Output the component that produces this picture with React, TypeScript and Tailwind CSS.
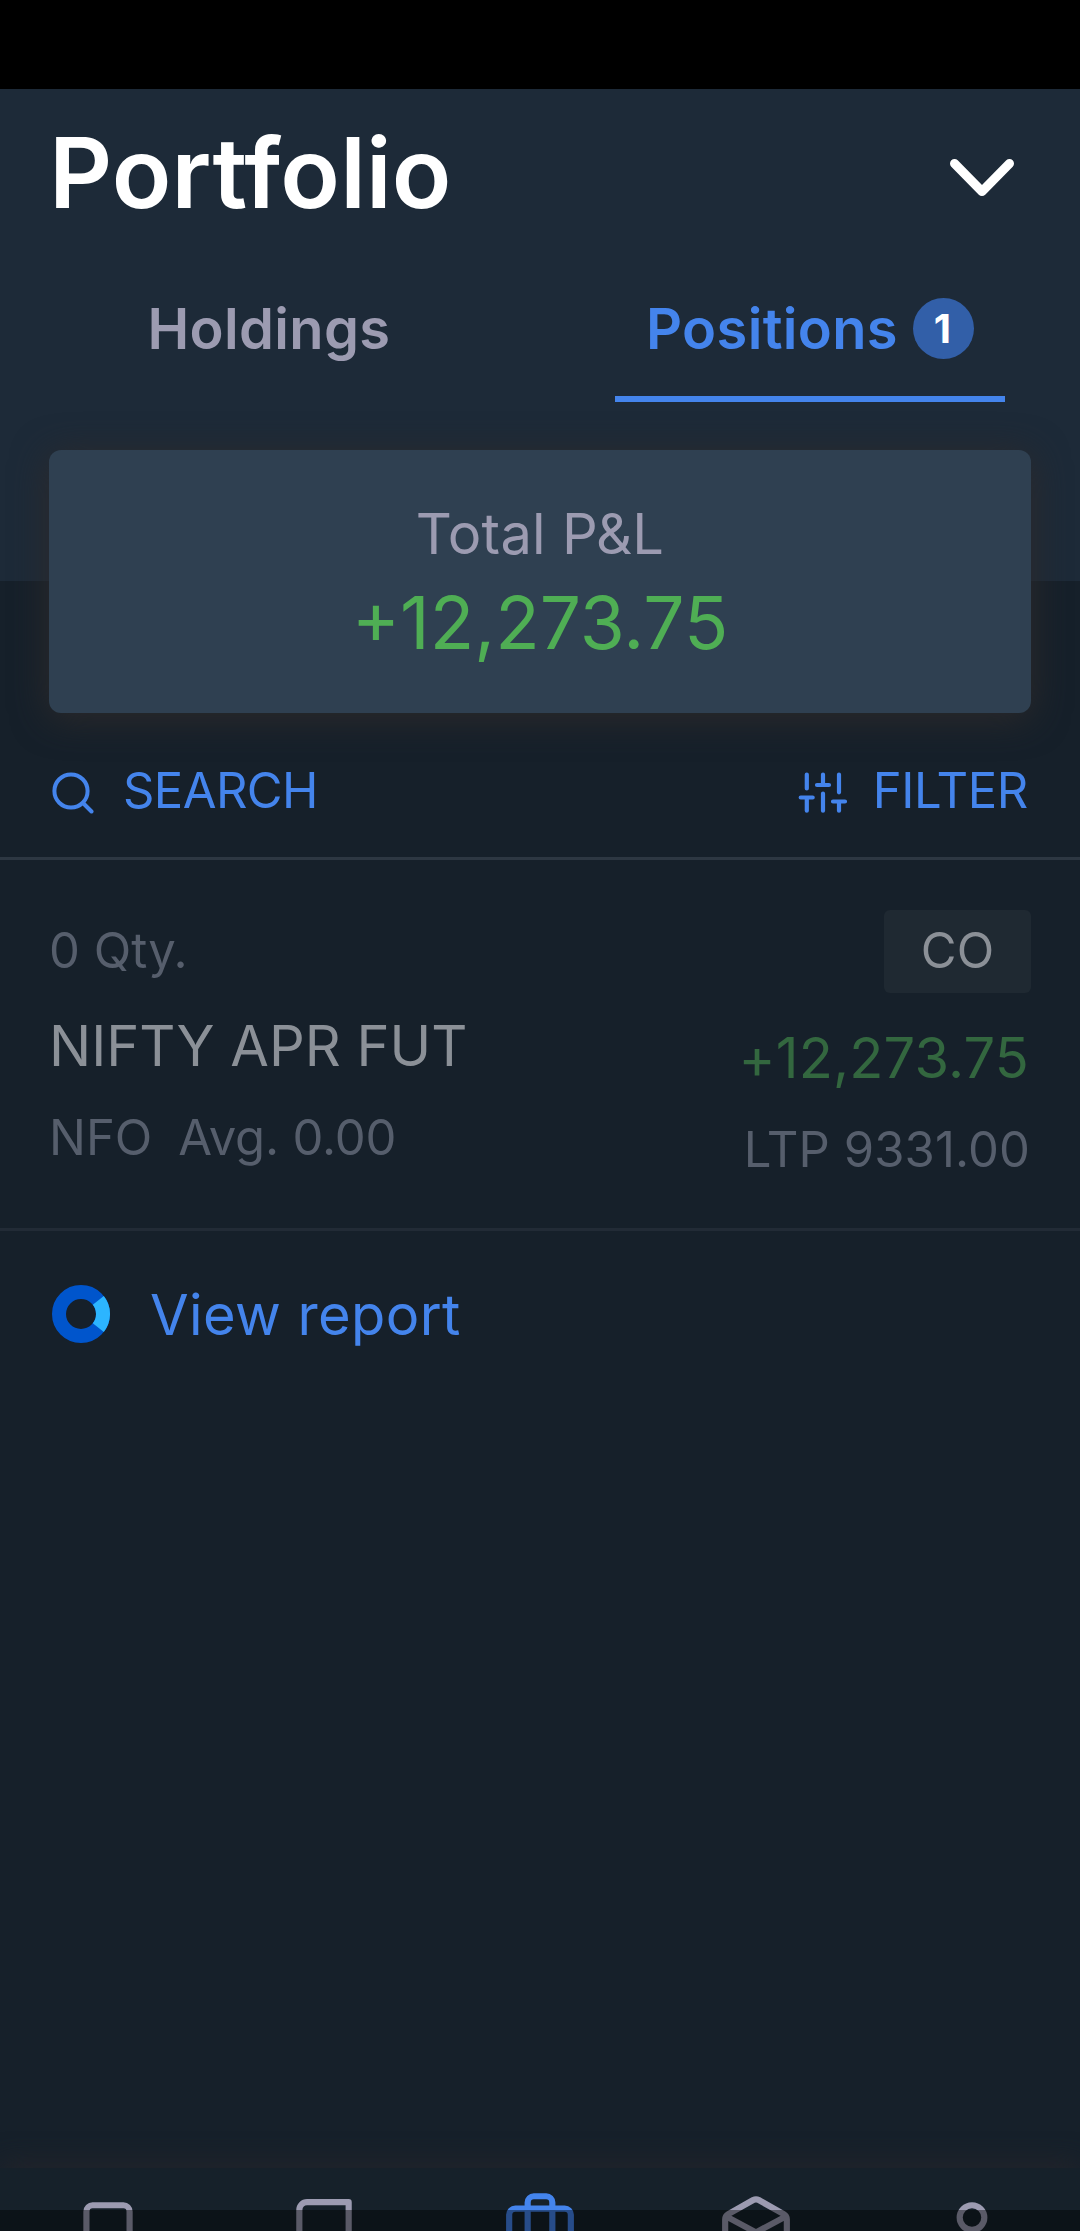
import React from "react";

const feather = {
  fill: "none",
  stroke: "currentColor",
  strokeWidth: 2,
  strokeLinecap: "round" as const,
  strokeLinejoin: "round" as const,
};

function NavItem({ children, active, className = "" }: { children: React.ReactNode; active?: boolean; className?: string }) {
  return (
    <button className={`flex justify-center ${active ? "text-[#4484ec]" : "text-[#9c9bb1]"}`}>
      <svg viewBox="0 0 24 24" className={`h-[74px] w-[74px] ${className}`} {...feather}>
        {children}
      </svg>
    </button>
  );
}

export default function App() {
  return (
    <div className="flex h-[2231px] w-[1080px] flex-col overflow-hidden bg-[#16202a] font-['Inter',sans-serif] whitespace-nowrap">
      <div className="h-[89px] shrink-0 bg-black" />
      <header className="h-[492px] shrink-0 bg-[#1d2a38]">
        <div className="flex h-[168px] items-center justify-between pl-[49px] pr-[65px]">
          <h1 className="text-[98px] leading-[168px] font-semibold tracking-[0.2px] text-white">Portfolio</h1>
          <svg viewBox="0 0 66 40" className="mt-[10px] h-[40px] w-[66px]" fill="none" stroke="white" strokeWidth="9" strokeLinecap="round" strokeLinejoin="round">
            <path d="M5.5 5.5 33 33.5 60.5 5.5" />
          </svg>
        </div>
        <nav className="flex h-[145px] px-[75px] text-[56px] leading-[145px] font-semibold tracking-[0.35px]">
          <div className="w-[388px] text-center text-[#9c9bb1]">Holdings</div>
          <div className="ml-auto flex h-[145px] w-[390px] items-center justify-center gap-[15px] border-b-[6px] border-[#4484ec] pt-[5px] text-[#4484ec]">
            <span>Positions</span>
            <span className="mb-px flex h-[61px] w-[61px] items-center justify-center rounded-full bg-[#325fa8] pr-[2px] text-[40px] leading-none font-bold text-white">1</span>
          </div>
        </nav>
      </header>

      <section className="relative mx-[49px] -mt-[131px] flex h-[263px] shrink-0 flex-col items-center rounded-[12px] bg-[#2f4051] pt-[48px] shadow-[0_5px_36px_0_#2d2a2b]">
        <p className="text-[56px] leading-[72px] tracking-[0.25px] text-[#9c9bb1]">Total P&amp;L</p>
        <p className="text-[73px] leading-[105px] text-[#4fae54]">+12,273.75</p>
      </section>

      <div className="flex h-[147px] shrink-0 items-center justify-between border-b-[3px] border-[#2d3742] pt-[11px] pr-[52px] pl-[49px] text-[49px] text-[#4484ec]">
        <button className="flex items-center">
          <svg viewBox="0 0 42 42" className="mt-[4px] mr-[29px] ml-[3px] h-[42px] w-[42px]" fill="none" stroke="currentColor" strokeWidth="4" strokeLinecap="round">
            <circle cx="19" cy="19" r="16.6" />
            <path d="m31 31 8.5 8.5" />
          </svg>
          <span className="tracking-[-0.6px]">SEARCH</span>
        </button>
        <button className="flex items-center">
          <svg viewBox="0 0 50 42" className="mt-[4px] mr-[25px] h-[42px] w-[50px]" fill="none" stroke="currentColor" strokeWidth="4.2" strokeLinecap="round">
            <path d="M8.8 2.5v14M2.7 25.5h12M8.8 25.5v13.2M25 2.5v10.5M19 13h12M25 21.5v17.2M41 2.5v17.8M35 29.5h12M41 29.5v9.2" />
          </svg>
          <span className="tracking-[-0.4px]">FILTER</span>
        </button>
      </div>

      <article className="flex h-[371px] shrink-0 justify-between border-b-[3px] border-[#222b36] px-[49px] pt-[50px]">
        <div className="text-[49px] text-[#565e6c]">
          <p className="leading-[82px]">0 Qty.</p>
          <p className="text-[56px] leading-[108px] text-[#8b9097]">NIFTY APR FUT</p>
          <p className="flex gap-[26px] leading-[75px]">
            <span>NFO</span>
            <span className="tracking-[-0.15px]">Avg. 0.00</span>
          </p>
        </div>
        <div className="flex flex-col items-end text-[49px] text-[#565e6c]">
          <span className="flex h-[83px] w-[147px] items-center justify-center rounded-[6px] bg-[#1f2932] pb-[2px] text-[#8b9097]">CO</span>
          <p className="mr-[2px] text-[56px] leading-[130px] tracking-[0.15px] text-[#33673f]">+12,273.75</p>
          <p className="mr-px leading-[54px] tracking-[0.1px]">LTP 9331.00</p>
        </div>
      </article>

      <button className="flex h-[167px] shrink-0 items-center pl-[52px] text-[56px] text-[#4484ec]">
        <svg viewBox="0 0 58 58" className="mr-[40px] mb-[2px] h-[58px] w-[58px]" fill="none" strokeWidth="14">
          <circle cx="29" cy="29" r="22" stroke="#0055cc" />
          <path d="M46.3 15.4A22 22 0 0 1 46.3 42.6" stroke="#2cb5ff" />
        </svg>
        <span className="tracking-[0.4px]">View report</span>
      </button>

      <footer className="relative mt-auto grid h-[63px] shrink-0 grid-cols-5 items-start overflow-visible bg-[#16212a] shadow-[0_-4px_28px_0_#24252b]">
        <NavItem className="mt-[28px]">
          <path d="m19 21-7-5-7 5V5a2 2 0 0 1 2-2h10a2 2 0 0 1 2 2z" />
        </NavItem>
        <NavItem className="mt-[28px]">
          <path d="M4 19.5A2.5 2.5 0 0 1 6.5 17H20M6.5 2H20v20H6.5A2.5 2.5 0 0 1 4 19.5v-15A2.5 2.5 0 0 1 6.5 2z" />
        </NavItem>
        <NavItem active className="mt-[19px]">
          <rect x="2" y="7" width="20" height="14" rx="2" />
          <path d="M16 21V5a2 2 0 0 0-2-2h-4a2 2 0 0 0-2 2v16" />
        </NavItem>
        <NavItem className="mt-[28px] overflow-visible">
          <path d="M2 16V7.6a2 2 0 0 1 1-1.7l8.1-4.6a2 2 0 0 1 1.8 0L21 5.9a2 2 0 0 1 1 1.7V16M2.3 6.6 12 11.8l9.7-5.2" />
        </NavItem>
        <NavItem className="mt-[28px]">
          <circle cx="12" cy="7" r="4" />
          <path d="M20 21v-2a4 4 0 0 0-4-4H8a4 4 0 0 0-4 4v2" />
        </NavItem>
        <div className="absolute inset-x-0 bottom-0 h-[21px] bg-black/42" />
      </footer>
    </div>
  );
}
